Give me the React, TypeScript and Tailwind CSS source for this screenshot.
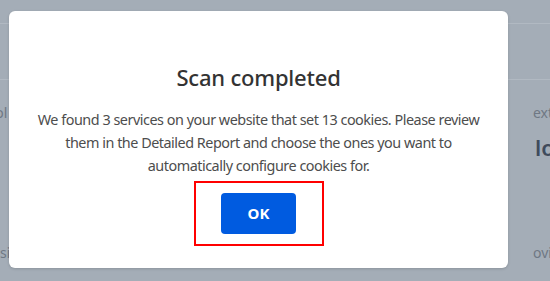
export default function App() {
  return (
    <div className="relative h-[281px] w-[550px] overflow-hidden bg-[#a4adb7] font-['Noto_Sans','Open_Sans',sans-serif]">
      {/* page underneath the overlay */}
      <div className="flex h-full flex-col text-[14px] text-[#6f7884]">
        <div className="h-[24px] border-b border-[#b1b9c2]" />
        <div className="h-[56px] border-b border-[#b1b9c2]" />
        <div className="mt-[22px] flex justify-between">
          <span className="-ml-[20px]">Tool</span>
          <span className="w-[17px] whitespace-nowrap">ext</span>
        </div>
        <div className="mt-[8px] flex justify-end">
          <span className="w-[15px] whitespace-nowrap text-[22px] font-semibold text-[#3f4b5c]">lo</span>
        </div>
        <div className="mt-auto mb-[18px] flex justify-between">
          <span className="-ml-[12px]">Visit</span>
          <span className="w-[17px] whitespace-nowrap">ovic</span>
        </div>
      </div>

      {/* modal */}
      <div className="absolute left-[9px] top-[11px] flex h-[257px] w-[499px] flex-col items-center rounded-[6px] bg-white pt-[51px] shadow-[0_1px_3px_rgba(0,0,0,0.15)]">
        <h2 className="text-[22px] leading-[30px] font-medium tracking-[-0.2px] text-[#333]">Scan completed</h2>
        <p className="mt-[16px] whitespace-nowrap text-center text-[14.4px] leading-[23px] tracking-[-0.48px] text-[#4d4d4d]">
          We found 3 services on your website that set 13 cookies. Please review
          <br />
          them in the Detailed Report and choose the ones you want to
          <br />
          automatically configure cookies for.
        </p>
        <div className="mt-[4px] flex h-[65px] w-[130px] items-start justify-center border-2 border-[#f00] pt-[10px]">
          <button className="h-[41px] w-[75px] rounded-[4px] bg-[#005be0] text-[15px] font-bold text-white">
            OK
          </button>
        </div>
      </div>
    </div>
  );
}
